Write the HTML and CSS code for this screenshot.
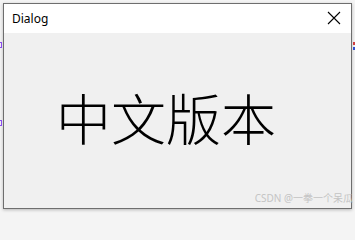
FILE: index.html
```html
<!DOCTYPE html>
<html>
<head>
<meta charset="utf-8">
<link rel="stylesheet" href="styles.css">
</head>
<body>
<div class="desk">
  <span class="mark m1"></span>
  <span class="mark m2"></span>
  <span class="mark m3"></span>
  <div class="window">
    <div class="titlebar">
      <span class="title">Dialog</span>
      <svg class="close" width="14" height="14" viewBox="0 0 14 14"><path d="M1 1L13 13M13 1L1 13" stroke="#000" stroke-width="1.1" fill="none"/></svg>
    </div>
    <div class="content">
      <div class="big">中文版本</div>
      <div class="wm">CSDN @一拳一个呆瓜</div>
    </div>
  </div>
</div>
</body>
</html>
```
FILE: styles.css
```css
html, body { margin: 0; padding: 0; }
body { width: 355px; height: 214px; overflow: hidden; background: #f4f4f4; }
.desk { position: relative; width: 355px; height: 214px; padding: 3px 3px 5px 3px; box-sizing: border-box; }
.window {
  width: 349px; height: 206px; box-sizing: border-box;
  border: 1px solid #6e6e6e;
  box-shadow: 0 1px 3px rgba(0,0,0,0.25);
  display: flex; flex-direction: column; background: #f0f0f0;
}
.titlebar {
  height: 29px; background: #fff; display: flex; align-items: center;
  justify-content: space-between; padding: 0 10px 0 8px; flex: none;
}
.title { font-family: "Noto Sans", "Liberation Sans", sans-serif; font-size: 12px; color: #000; margin-top: -1px; }
.close { display: block; margin-top: -1px; }
.content { flex: 1; position: relative; padding: 48px 0 0 52px; }
.big {
  font-family: "Noto Sans CJK SC", sans-serif; font-weight: 300; font-size: 55px;
  line-height: 71px; color: #000; letter-spacing: 0; margin-top: 0;
}
.wm {
  position: absolute; right: -2px; bottom: 3px;
  font-family: "Noto Sans", "Noto Sans CJK SC", sans-serif; font-size: 10px; color: #c4c4c4;
}
.mark { position: absolute; width: 3px; height: 6px; }
.m1 { left: 0; top: 42px; border: 1px solid #8a4cf0; border-left: none; width: 2px; box-sizing: border-box; }
.m2 { left: 0; top: 120px; border: 1px solid #8a4cf0; border-left: none; width: 2px; box-sizing: border-box; }
.m3 { right: 0; top: 42px; width: 2px; height: 8px; background: linear-gradient(#d04040 0 40%, transparent 40% 60%, #3050d0 60%); }
```
